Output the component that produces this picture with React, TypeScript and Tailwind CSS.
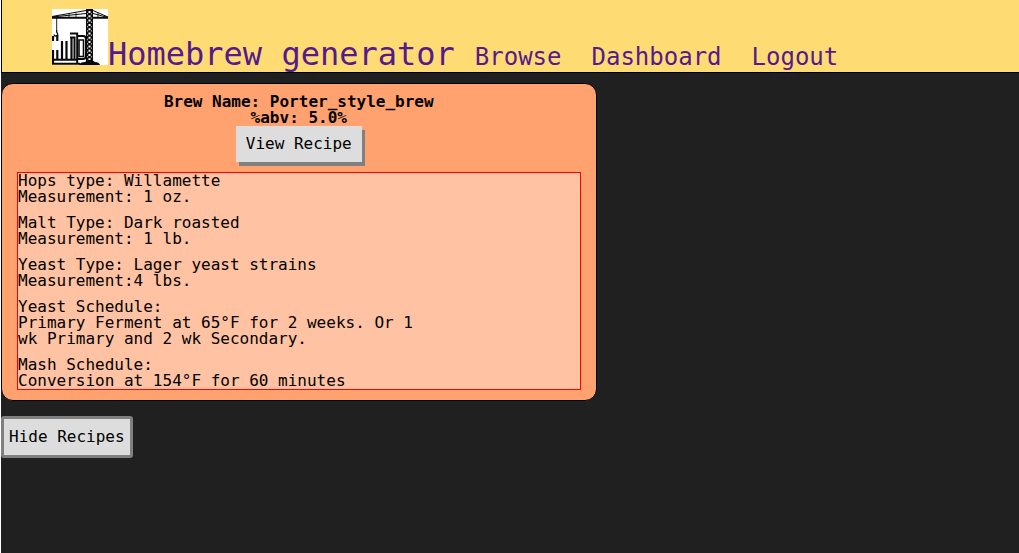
import React from "react";

const ingredients = [
  { title: "Hops type: Willamette", detail: "Measurement: 1 oz." },
  { title: "Malt Type: Dark roasted", detail: "Measurement: 1 lb." },
  { title: "Yeast Type: Lager yeast strains", detail: "Measurement:4 lbs." },
  {
    title: "Yeast Schedule:",
    detail: "Primary Ferment at 65°F for 2 weeks. Or 1 wk Primary and 2 wk Secondary.",
  },
  { title: "Mash Schedule:", detail: "Conversion at 154°F for 60 minutes" },
];

function Logo() {
  return (
    <svg viewBox="0 0 56 56" className="size-14 shrink-0 bg-white" role="img" aria-label="Homebrew generator logo" fill="none" stroke="#0a0a0a">
      {/* crane jib */}
      <path d="M0 7.5 34 1.5M0 8 34 4.5M41 1.5 56 8M41 4.5 56 8.5" strokeWidth="1" />
      <path d="M0 8.8H56" strokeWidth="2" />
      <path d="M17 5v3M24 3.500v4.500M46 4v4" strokeWidth="0.8" />
      {/* hook */}
      <path d="M4.700 9v12" strokeWidth="0.9" />
      <path d="M4.700 21v2l1 2q0 2-2 2-1.500 0-1.500-1.500" strokeWidth="1.3" />
      {/* mast */}
      <path d="M34 0h7v54h-7z" fill="#0a0a0a" stroke="none" />
      <path d="M37.500 2v51" stroke="#fff" strokeWidth="2" strokeDasharray="2 2.300" />
      <path d="M35.600 4v48M39.400 4v48" stroke="#fff" strokeWidth="0.7" strokeDasharray="1.500 2.800" />
      <path d="M27 56q1-3 6-3l3-2h4l3 2q4 0 5 3z" fill="#0a0a0a" stroke="none" />
      {/* mug */}
      <path d="M1 27v5M5.300 26v6M1 41v14M5.300 41v9M10 32v18.500M14.500 32v18.500M19.500 29v21.500" strokeWidth="2.2" />
      <path d="M0 50.800H25M0 54.800H28" strokeWidth="2" />
      <path d="M18 24.500h7.200v30M18 28.500h4.500v22" strokeWidth="2" />
      <path d="M25 27h6q3 0 3 3v17q0 3-3 3h-6" strokeWidth="2" />
      <path d="M27 31h4.500v16.500h-4.500z" strokeWidth="1.600" />
    </svg>
  );
}

export default function App() {
  return (
    <div className="min-h-screen border-l border-white bg-[#202020] font-['DejaVu_Sans_Mono',monospace] text-base leading-4 text-black">
      <header className="flex items-baseline gap-5 border-b border-l border-black bg-[#ffdc73] pb-0.5 pl-[50px] pt-[9px] text-[#551a8b]">
        <a href="#home" className="flex items-baseline">
          <Logo />
          <span className="whitespace-nowrap text-[32px] leading-8">Homebrew generator</span>
        </a>
        <nav className="flex gap-[30px] text-2xl leading-6">
          <a href="#browse">Browse</a>
          <a href="#dashboard">Dashboard</a>
          <a href="#logout">Logout</a>
        </nav>
      </header>

      <main className="mt-2.5 flex flex-col items-start gap-[15px]">
        <article className="w-[58.5%] rounded-xl border border-black bg-[#ffa270] px-[15px] py-2.5">
          <div className="flex flex-col items-center">
            <h2 className="font-bold">Brew Name: Porter_style_brew</h2>
            <p className="font-bold">%abv: 5.0%</p>
            <button type="button" className="bg-[#dddddd] px-2.5 py-2.5 shadow-[3px_4px_0_0_#808080]">View Recipe</button>
          </div>
          <section className="mt-2.5 flex flex-col gap-2.5 border border-[#ff0000] bg-[#ffc2a3]">
            {ingredients.map((item) => (
              <div key={item.title}>
                <h3>{item.title}</h3>
                <p className="max-w-[400px]">{item.detail}</p>
              </div>
            ))}
          </section>
        </article>
        <button type="button" className="rounded-[3px] border-[3px] border-[#808080] bg-[#dddddd] px-[5px] py-2.5">Hide Recipes</button>
      </main>
    </div>
  );
}
